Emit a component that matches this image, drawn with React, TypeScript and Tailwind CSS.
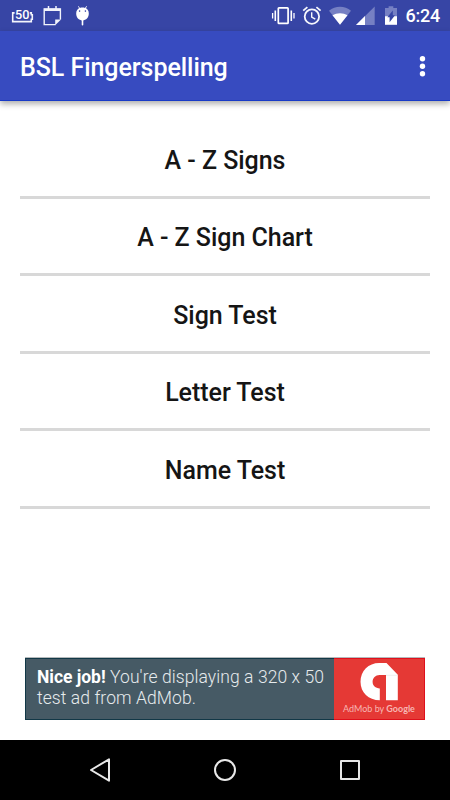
import React from 'react';

const menuItems = ['A - Z Signs', 'A - Z Sign Chart', 'Sign Test', 'Letter Test', 'Name Test'];

function StatusBar() {
  return (
    <div className="flex h-[31px] items-start justify-between bg-[#3745a5] text-white">
      <div className="flex">
        <svg className="ml-[10px] h-[31px] w-[26px]" viewBox="10 0 26 31" fill="none" stroke="#f4f5fc" strokeWidth="1.6">
          <path d="M14.6 12.9H12.7V21.6H31.3V19.2H32.3V14.8H31.3V12.9H29.8" />
          <text x="15.1" y="19.1" fontSize="13" textLength="14.4" lengthAdjust="spacingAndGlyphs" stroke="none" fill="#fff" className="font-medium [font-family:Roboto,sans-serif]">50</text>
        </svg>
        <svg className="ml-[6px] h-[31px] w-[22px]" viewBox="42 0 22 31" fill="none" stroke="#f1f3fb">
          <path d="M60.4 19.4V8.9H44.2V24.6H55.5" strokeWidth="1.4" />
          <path d="M44 9.8H60.5" strokeWidth="2.4" />
          <path d="M48.5 6V10M56 6V10" strokeWidth="1.5" />
          <path d="M55.2 25.2V19.5H61Z" fill="#f1f3fb" stroke="none" />
        </svg>
        <svg className="ml-[10px] h-[31px] w-[18px]" viewBox="74 0 18 31" fill="#fff">
          <path d="M76.2 13.4C76.2 10.7 77.5 9 79.1 8.2L78 6.2L78.5 5.9L79.9 7.9C81.4 7.3 83.5 7.3 85 7.9L86.4 5.9L87 6.2L85.9 8.2C87.6 9 88.8 10.7 88.8 13.4C88.8 17.3 86.2 20.3 82.5 20.3S76.2 17.3 76.2 13.4Z" />
          <rect x="81.7" y="19.5" width="1.6" height="6" rx=".7" />
          <circle cx="79.6" cy="11.1" r=".8" fill="#3745a5" />
          <circle cx="85.4" cy="11.1" r=".8" fill="#3745a5" />
        </svg>
      </div>
      <div className="flex">
        <svg className="h-[31px] w-[26px]" viewBox="270 0 26 31" fill="none" stroke="#fff">
          <rect x="278.3" y="7.8" width="9.8" height="15.6" rx=".7" strokeWidth="1.7" />
          <path d="M275.3 10.5V21M291.3 10.5V21" strokeWidth="1.6" />
          <path d="M272.6 13V18.5M294 13V18.5" strokeWidth="1.3" />
        </svg>
        <svg className="ml-[5px] h-[31px] w-[22px]" viewBox="301 0 22 31" fill="none" stroke="#f5f6fc">
          <circle cx="311.9" cy="16.6" r="7.2" strokeWidth="1.8" />
          <path d="M303.2 10.6L307.4 7.1M316.4 7.1L320.6 10.6" strokeWidth="1.8" />
          <path d="M311.7 12.2V17L315.3 19.2" strokeWidth="1.4" />
        </svg>
        <svg className="ml-[5px] h-[31px] w-[24px]" viewBox="328 0 24 31">
          <path d="M340 24.7L329 10.7C335.2 5.5 344.8 5.5 351 10.7Z" fill="#7680c3" />
          <path d="M340 24.7L332.5 15.3C336.8 12.4 343.2 12.4 347.5 15.3Z" fill="#fff" />
        </svg>
        <svg className="ml-[3px] h-[31px] w-[21px]" viewBox="355 0 21 31">
          <path d="M356 25L374.7 6.4V25Z" fill="#7680c3" />
          <path d="M356 25L365 16V25Z" fill="#fff" />
        </svg>
        <svg className="ml-[7px] h-[31px] w-[16px]" viewBox="383 0 16 31">
          <path d="M388.6 6.2H393.3V8.1H397V16.5H385V8.1H388.6Z" fill="#7680c3" />
          <path d="M385 16.2H397V24.8H385Z" fill="#fff" />
          <path d="M392.8 10.4V15.2H395L389.6 22.3V17.2H387.3Z" fill="#3745a5" />
        </svg>
        <div className="ml-[6.5px] w-[44.5px] pt-[5px] text-[18px] leading-[22px] font-medium tracking-[-0.25px] whitespace-nowrap">6:24</div>
      </div>
    </div>
  );
}

function AdMobLogo() {
  return (
    <svg className="mt-[3px] h-[39px] w-[40px]" viewBox="359 661 40 39">
      <path d="M379.8 699.3C368.5 699.3 360.5 691.5 360.5 680.8C360.5 670 368.5 662 379.2 662H386.5L397.8 673.8V699.3H386V674H379.5C375.5 674 372.6 677 372.6 680.8C372.6 684.7 375.5 687.4 379.8 687.4Z" fill="#fff" />
      <path d="M386 674.3H397.5" stroke="#ddd" strokeWidth=".5" />
    </svg>
  );
}

function AdBanner() {
  return (
    <div className="mx-[25px] mt-[148px] flex h-[63px] border-t border-t-[#b5b9bb]">
      <div className="w-[309px] border border-r-0 border-[#123847] bg-[#465a65] pt-[8px] pl-[11px] text-[17.5px] leading-[21px] font-light tracking-[0.08px] whitespace-nowrap text-[#e6ebed]">
        <p><span className="font-bold tracking-[-0.03px] text-white">Nice job!</span> You&#39;re displaying a 320 x 50</p>
        <p>test ad from AdMob.</p>
      </div>
      <div className="flex w-[91px] flex-col items-center border border-l-0 border-[#df101b] bg-[#e53935]">
        <AdMobLogo />
        <p className="mt-[2px] text-[9px] leading-[12px] whitespace-nowrap text-[#f7b6b3] [font-family:Lato,sans-serif]">AdMob by <span className="font-bold">Google</span></p>
      </div>
    </div>
  );
}

export default function App() {
  return (
    <div className="flex h-[800px] w-[450px] flex-col overflow-hidden bg-white [font-family:Roboto,sans-serif]">
      <StatusBar />
      <header className="flex h-[70px] shrink-0 items-center justify-between border-b border-[#1739c6] bg-[#374bc0] pr-[24px] pl-[20px] shadow-[0_3px_6px_rgba(0,0,0,0.32)]">
        <h1 className="pt-[4px] text-[25px] leading-[30px] font-medium tracking-[-0.05px] text-white">BSL Fingerspelling</h1>
        <svg className="h-[24px] w-[7px]" viewBox="0 0 7 24" fill="#fff">
          <circle cx="3.5" cy="4.8" r="2.7" />
          <circle cx="3.5" cy="12.3" r="2.7" />
          <circle cx="3.5" cy="19.8" r="2.7" />
        </svg>
      </header>
      <main className="flex-1">
        <nav className="mx-[20px] pt-[20px]">
          {menuItems.map((item) => (
            <button key={item} className="flex h-[77.5px] w-full items-center justify-center border-b-[3px] border-[#d8d8d8] pt-[5px] text-[25px] leading-[30px] font-medium tracking-[-0.03px] text-[#151515]">
              {item}
            </button>
          ))}
        </nav>
        <AdBanner />
      </main>
      <footer className="flex h-[60px] shrink-0 items-center justify-between bg-black px-[88px]">
        <svg className="h-[26px] w-[24px]" viewBox="88 757 24 26" fill="none" stroke="#e8e8e8" strokeWidth="2" strokeLinejoin="round">
          <path d="M91 770L109 759.3V780.7Z" />
        </svg>
        <svg className="h-[24px] w-[24px]" viewBox="213 758 24 24" fill="none" stroke="#e8e8e8" strokeWidth="2">
          <circle cx="225" cy="770" r="10" />
        </svg>
        <svg className="h-[24px] w-[24px]" viewBox="338 758 24 24" fill="none" stroke="#e8e8e8" strokeWidth="2" strokeLinejoin="round">
          <rect x="341" y="761" width="18" height="18" />
        </svg>
      </footer>
    </div>
  );
}
